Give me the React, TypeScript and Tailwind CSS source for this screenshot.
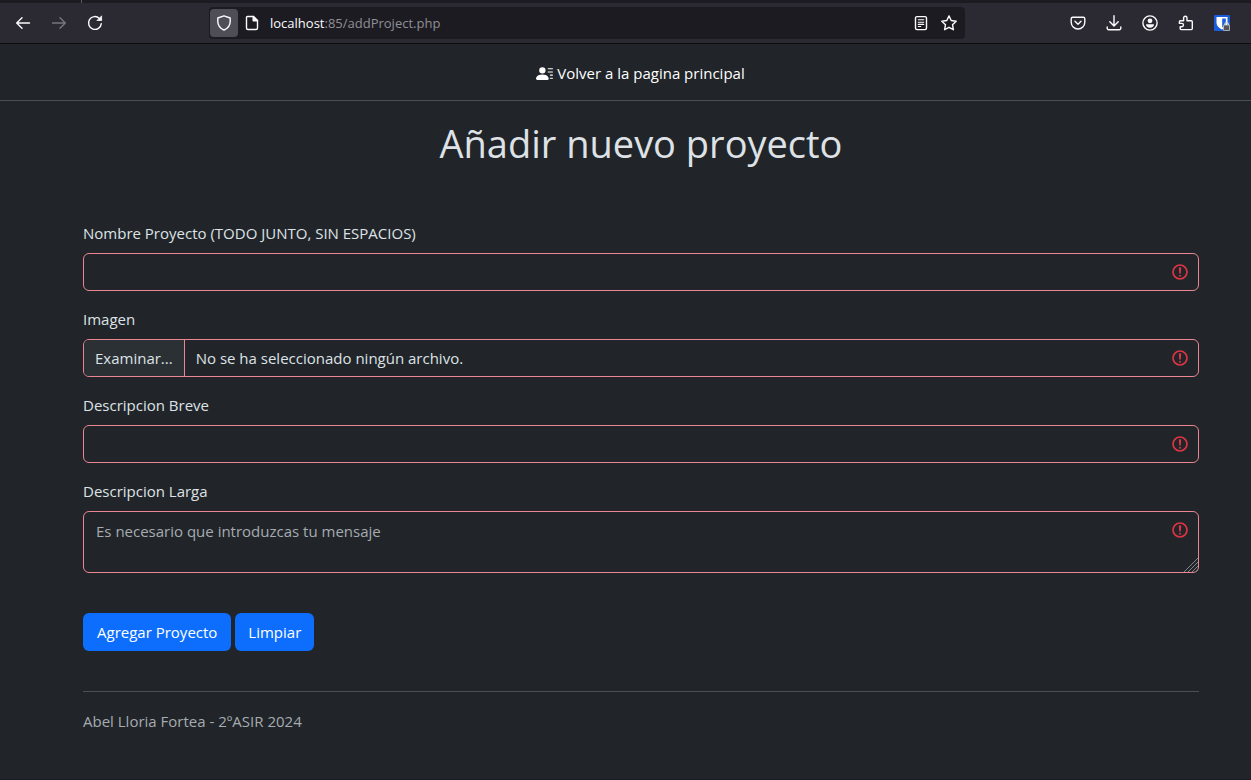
import React from "react";

const Icon = ({ children, className = "" }: { children: React.ReactNode; className?: string }) => (
  <svg
    aria-hidden="true"
    viewBox="0 0 16 16"
    className={`size-4 shrink-0 ${className}`}
    fill="none"
    stroke="currentColor"
    strokeWidth="1.4"
    strokeLinecap="round"
    strokeLinejoin="round"
  >
    {children}
  </svg>
);

const ToolButton = ({ label, children, className = "" }: { label: string; children: React.ReactNode; className?: string }) => (
  <button type="button" aria-label={label} className={`flex size-7 items-center justify-center rounded-sm ${className}`}>
    {children}
  </button>
);

const InvalidIcon = () => (
  <svg
    aria-hidden="true"
    viewBox="0 0 12 12"
    className="pointer-events-none absolute top-[9px] right-[9px] size-5"
    fill="none"
    stroke="#dc3545"
  >
    <circle cx="6" cy="6" r="4.2" />
    <path d="M5.8 3.6h.4L6 6.5z" strokeLinejoin="round" />
    <circle cx="6" cy="8.2" r=".6" fill="#dc3545" stroke="none" />
  </svg>
);

const Field = ({ id, label, children }: { id: string; label: string; children: React.ReactNode }) => (
  <div className="mb-4">
    <label htmlFor={id} className="mb-2 block">
      {label}
    </label>
    <div className="relative">
      {children}
      <InvalidIcon />
    </div>
  </div>
);

const inputClass =
  "block w-full rounded-md border border-[#ea868f] bg-[#212529] px-3 text-[#dee2e6] outline-none placeholder:text-[#a6abb0]";

function BrowserBar() {
  return (
    <header className="border-b border-[#0c0c0d] bg-[#2b2a33] text-[#fbfbfe]">
      <div className="h-[3px] bg-[#1c1b22]">
        <div className="h-full w-[82px] border-r border-[#5b5a63]" />
      </div>
      <div className="flex h-10 items-center pr-[15px] pl-[9px]">
        <div className="flex w-[200px] shrink-0 gap-2">
          <ToolButton label="Atrás">
            <Icon>
              <path d="M14.5 8H1.8M7 2.7 1.7 8 7 13.3" />
            </Icon>
          </ToolButton>
          <ToolButton label="Adelante" className="text-[#77767e]">
            <Icon>
              <path d="M1.5 8h12.7M9 2.7 14.3 8 9 13.3" />
            </Icon>
          </ToolButton>
          <ToolButton label="Recargar">
            <Icon>
              <path d="M14.3 8.6A6.4 6.4 0 1 1 12.4 3.4" />
              <path d="M14.6 1.2v4.3h-4.3z" fill="currentColor" strokeWidth="0.8" />
            </Icon>
          </ToolButton>
        </div>
        <div className="flex h-8 flex-1 items-center rounded bg-[#1c1b22] pr-[2px] pl-[1px]">
          <ToolButton label="Protección" className="bg-[#4f4e56]">
            <Icon>
              <path d="M8 .9 14.2 3v3.6c0 3.9-2.8 7-6.2 8.6C4.600 13.600 1.800 10.500 1.800 6.600V3z" />
            </Icon>
          </ToolButton>
          <ToolButton label="Información del sitio">
            <Icon>
              <path d="M3.500 1.500h6L13.500 5.500v7.500a1.500 1.500 0 0 1-1.500 1.500H4A1.500 1.500 0 0 1 2.500 13V2.500a1 1 0 0 1 1-1z" />
              <path d="M9.200 1.500v4.300h4.300z" fill="currentColor" />
            </Icon>
          </ToolButton>
          <input
            aria-label="Dirección"
            readOnly
            value="localhost:85/addProject.php"
            className="sr-only"
          />
          <p aria-hidden="true" className="flex-1 pl-1 text-[13px] leading-5 text-[#8f8f95]">
            <span className="text-[#fbfbfe]">localhost</span>:85/addProject.php
          </p>
          <ToolButton label="Vista de lectura">
            <Icon>
              <rect x="2.500" y="1.600" width="11" height="13" rx="1.500" />
              <path d="M5.300 4.700h5.400M5.300 7.200h5.400M5.300 9.400h5.400M5.300 11.500h2.400" strokeWidth="1.100" />
            </Icon>
          </ToolButton>
          <ToolButton label="Marcador">
            <Icon>
              <path d="m8 .9 2.200 4.600 5 .7-3.700 3.500.9 5L8 12.300l-4.400 2.400.9-5L.8 6.200l5-.7z" />
            </Icon>
          </ToolButton>
        </div>
        <div className="ml-[99px] flex shrink-0 gap-2">
          <ToolButton label="Pocket">
            <Icon>
              <path d="M2.700 2.200h10.600a1.500 1.500 0 0 1 1.500 1.500v3.500a6.800 6.800 0 0 1-13.600 0V3.700a1.500 1.500 0 0 1 1.500-1.500z" />
              <path d="M5 6.300 8 9.200l3-2.900" />
            </Icon>
          </ToolButton>
          <ToolButton label="Descargas">
            <Icon>
              <path d="M8 .8v10M3.800 6.800 8 11l4.200-4.200M1.200 12v1.200a1.500 1.500 0 0 0 1.500 1.500h10.600a1.500 1.500 0 0 0 1.500-1.500V12" />
            </Icon>
          </ToolButton>
          <ToolButton label="Cuenta">
            <Icon>
              <circle cx="8" cy="8" r="7.100" />
              <circle cx="8" cy="5.800" r="2.400" fill="currentColor" stroke="none" />
              <path d="M4 9.200h8c0 2-1.700 3.500-4 3.500s-4-1.500-4-3.500z" fill="currentColor" stroke="none" />
            </Icon>
          </ToolButton>
          <ToolButton label="Extensiones">
            <Icon>
              <path d="M2.200 11.700h1.600a1.650 1.650 0 0 0 0-3.300H1.400V6.700a1 1 0 0 1 1-1H5.600V2.900a1.700 1.700 0 0 1 3.400 0v2.800h4.300a1 1 0 0 1 1 1v6.900a1 1 0 0 1-1 1H3.200a1 1 0 0 1-1-1z" />
            </Icon>
          </ToolButton>
          <ToolButton label="Bitwarden">
            <svg aria-hidden="true" viewBox="0 0 16 16" className="size-4">
              <rect width="16" height="16" rx="1" fill="#175ddc" />
              <path d="M2.500 2h11v6c0 3-2.500 5-5.500 6.500C5 13 2.500 11 2.500 8z" fill="#fff" />
              <path d="M8.200 3.500h3.600V8c0 1.700-1.600 3.300-3.600 4.500z" fill="#175ddc" />
              <path d="M10.800 10.500V9.500a1.800 1.800 0 0 1 3.600 0v1" fill="none" stroke="#d0d0d0" strokeWidth="1.300" />
              <rect x="9.400" y="10" width="6.200" height="5.600" rx=".7" fill="#555" stroke="#d0d0d0" strokeWidth=".8" />
            </svg>
          </ToolButton>
        </div>
      </div>
    </header>
  );
}

export default function App() {
  return (
    <div className="min-h-screen border-b border-[#1c1b22] bg-[#212529] font-['Open_Sans','Noto_Sans',sans-serif] text-[15px] leading-6 text-[#dee2e6]">
      <BrowserBar />
      <nav className="flex justify-center border-b border-[#495057] pt-[17px] pb-[15px] pl-[30px]">
        <a href="#inicio" className="flex items-center gap-1 text-white">
          <svg aria-hidden="true" viewBox="0 0 16 16" fill="currentColor" className="size-[17px]">
            <path d="M6 8a3 3 0 1 0 0-6 3 3 0 0 0 0 6m-5 6s-1 0-1-1 1-4 6-4 6 3 6 4-1 1-1 1zM11 3.500a.5.5 0 0 1 .5-.5h4a.5.5 0 0 1 0 1h-4a.5.5 0 0 1-.5-.5m.5 2.500a.5.5 0 0 0 0 1h4a.5.5 0 0 0 0-1zm2 3a.5.5 0 0 0 0 1h2a.5.5 0 0 0 0-1zm0 3a.5.5 0 0 0 0 1h2a.5.5 0 0 0 0-1z" />
          </svg>
          Volver a la pagina principal
        </a>
      </nav>
      <main className="pr-[52px] pl-[83px]">
        <h1 className="pt-[18px] text-center text-[38px] leading-12">Añadir nuevo proyecto</h1>
        <form className="mt-[54px]">
          <Field id="nombre" label="Nombre Proyecto (TODO JUNTO, SIN ESPACIOS)">
            <input id="nombre" type="text" className={`${inputClass} h-[38px]`} />
          </Field>
          <Field id="imagen" label="Imagen">
            <input id="imagen" type="file" className="peer sr-only" />
            <label htmlFor="imagen" className="flex h-[38px] overflow-hidden rounded-md border border-[#ea868f]">
              <span className="flex items-center border-r border-[#ea868f] bg-[#2b3035] px-[11px]">Examinar...</span>
              <span className="flex items-center px-[11px]">No se ha seleccionado ningún archivo.</span>
            </label>
          </Field>
          <Field id="breve" label="Descripcion Breve">
            <input id="breve" type="text" className={`${inputClass} h-[38px]`} />
          </Field>
          <Field id="larga" label="Descripcion Larga">
            <textarea
              id="larga"
              placeholder="Es necesario que introduzcas tu mensaje"
              className={`${inputClass} h-[62px] resize-none py-[7px]`}
            />
            <svg
              aria-hidden="true"
              viewBox="0 0 14 14"
              className="pointer-events-none absolute right-[1px] bottom-[1px] size-[14px]"
              stroke="#85888b"
            >
              <path d="M0 14 14 0M4 14 14 4M8 14l6-6M12 14l2-2" />
            </svg>
          </Field>
          <div className="flex gap-1 pt-6">
            <button type="submit" className="h-[38px] rounded-md bg-[#0d6efd] px-[14px] text-white">
              Agregar Proyecto
            </button>
            <button type="reset" className="h-[38px] rounded-md bg-[#0d6efd] px-[13px] text-white">
              Limpiar
            </button>
          </div>
        </form>
        <footer className="mt-10 border-t border-[#495057] py-[17px] text-[#a6abb0]">
          Abel Lloria Fortea - 2ºASIR 2024
        </footer>
      </main>
    </div>
  );
}
